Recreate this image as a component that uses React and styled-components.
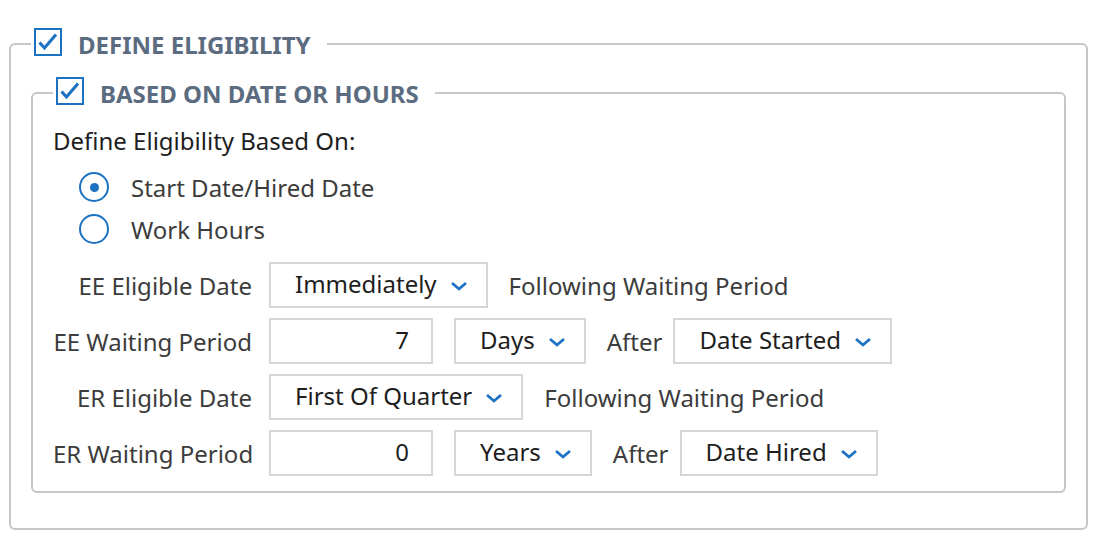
import React from 'react';
import styled, { createGlobalStyle } from 'styled-components';

const GlobalStyle = createGlobalStyle`
  body {
    margin: 0;
    background: #ffffff;
    font-family: 'Noto Sans', 'Open Sans', sans-serif;
  }
`;

const Page = styled.div`
  padding: 28px 13px 0 9px;
`;

const Group = styled.fieldset`
  margin: 0;
  min-width: 0;
  border: 2px solid #c6c6c6;
  border-radius: 6px;
  padding: 0 20px ${props => props.$bottom}px 20px;
`;

const Legend = styled.legend`
  display: flex;
  align-items: flex-start;
  height: 32px;
  padding: 0 16px 0 3px;
`;

const CheckBox = styled.span`
  width: 28px;
  height: 28px;
  box-sizing: border-box;
  border: 2px solid #1b72c2;
  display: flex;
`;

const LegendText = styled.span`
  margin-left: 16px;
  line-height: 34px;
  font-size: 24px;
  font-weight: 700;
  color: #5c6c80;
`;

const Body = styled.div`
  padding-top: ${props => props.$top}px;
`;

const Heading = styled.div`
  font-size: 24px;
  line-height: 28px;
  color: #1e1e1e;
`;

const RadioList = styled.div`
  margin-top: 11px;
  padding-left: 26px;
  margin-bottom: 12px;
`;

const RadioRow = styled.div`
  display: flex;
  align-items: center;
  height: 42px;
`;

const RadioCircle = styled.span`
  width: 30px;
  height: 30px;
  box-sizing: border-box;
  border: 2px solid #1b72c2;
  border-radius: 50%;
  display: flex;
  align-items: center;
  justify-content: center;
  &::after {
    content: '';
    width: 9px;
    height: 9px;
    border-radius: 50%;
    background: #1b72c2;
    display: ${props => (props.$on ? 'block' : 'none')};
  }
`;

const RadioLabel = styled.span`
  margin-left: 22px;
  font-size: 24px;
  color: #3c3c3c;
`;

const FormRow = styled.div`
  display: flex;
  align-items: center;
  height: 46px;
  & + & {
    margin-top: 10px;
  }
`;

const Label = styled.span`
  width: 199px;
  margin-right: 17px;
  text-align: right;
  font-size: 24px;
  color: #3c3c3c;
  white-space: nowrap;
`;

const Box = styled.div`
  height: 46px;
  box-sizing: border-box;
  border: 2px solid #d6d6d6;
  display: flex;
  align-items: center;
  font-size: 24px;
  line-height: 30px;
  color: #1e1e1e;
  margin-right: 21px;
  padding-bottom: 2px;
  white-space: nowrap;
`;

const NumberBox = styled(Box)`
  width: 164px;
  justify-content: flex-end;
  padding-right: 22px;
`;

const SelectBox = styled(Box)`
  padding-left: 24px;
  padding-right: 18px;
  gap: 13px;
`;

const Note = styled.span`
  font-size: 24px;
  color: #3c3c3c;
  margin-right: 11px;
  white-space: nowrap;
`;

const ChevronIcon = styled.svg`
  margin-top: 3px;
  flex-shrink: 0;
`;

const Check = () => (
  <svg width="24" height="24" viewBox="0 0 24 24">
    <path d="M3.5 12.5 L8.5 18 L20 4.5" fill="none" stroke="#1b72c2" strokeWidth="3.1" />
  </svg>
);

const Chevron = () => (
  <ChevronIcon width="18" height="10" viewBox="0 0 18 10">
    <path d="M2 2 L9 8 L16 2" fill="none" stroke="#1b72c2" strokeWidth="2.8" />
  </ChevronIcon>
);

const Select = ({ value }) => (
  <SelectBox>
    <span>{value}</span>
    <Chevron />
  </SelectBox>
);

export default function App() {
  return (
    <Page>
      <GlobalStyle />
      <Group $bottom={35}>
        <Legend>
          <CheckBox><Check /></CheckBox>
          <LegendText>DEFINE ELIGIBILITY</LegendText>
        </Legend>
        <Body $top={17}>
          <Group $bottom={15}>
            <Legend>
              <CheckBox><Check /></CheckBox>
              <LegendText>BASED ON DATE OR HOURS</LegendText>
            </Legend>
            <Body $top={18}>
              <Heading>Define Eligibility Based On:</Heading>
              <RadioList>
                <RadioRow>
                  <RadioCircle $on />
                  <RadioLabel>Start Date/Hired Date</RadioLabel>
                </RadioRow>
                <RadioRow>
                  <RadioCircle />
                  <RadioLabel>Work Hours</RadioLabel>
                </RadioRow>
              </RadioList>
              <FormRow>
                <Label>EE Eligible Date</Label>
                <Select value="Immediately" />
                <Note>Following Waiting Period</Note>
              </FormRow>
              <FormRow>
                <Label>EE Waiting Period</Label>
                <NumberBox>7</NumberBox>
                <Select value="Days" />
                <Note>After</Note>
                <Select value="Date Started" />
              </FormRow>
              <FormRow>
                <Label>ER Eligible Date</Label>
                <Select value="First Of Quarter" />
                <Note>Following Waiting Period</Note>
              </FormRow>
              <FormRow>
                <Label>ER Waiting Period</Label>
                <NumberBox>0</NumberBox>
                <Select value="Years" />
                <Note>After</Note>
                <Select value="Date Hired" />
              </FormRow>
            </Body>
          </Group>
        </Body>
      </Group>
    </Page>
  );
}
